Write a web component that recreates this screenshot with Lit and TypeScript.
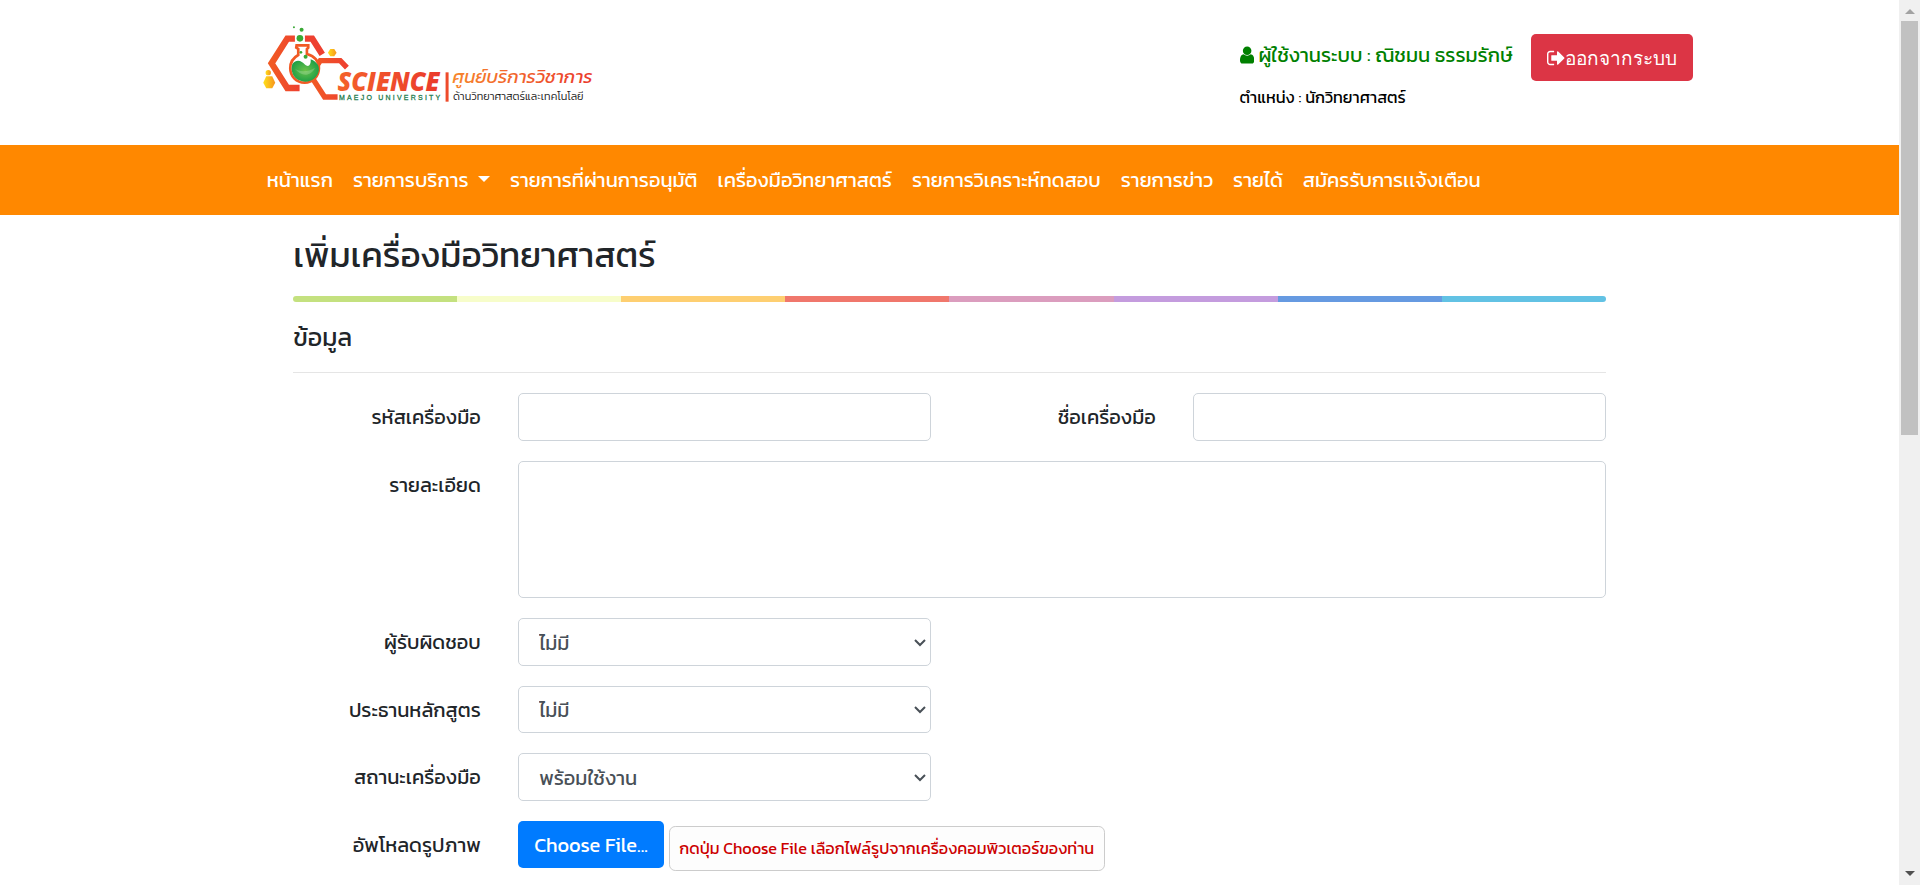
import { LitElement, html, css, svg } from "lit";
import { customElement } from "lit/decorators.js";

const NAV = [
  { label: "หน้าแรก" },
  { label: "รายการบริการ", menu: true },
  { label: "รายการที่ผ่านการอนุมัติ" },
  { label: "เครื่องมือวิทยาศาสตร์" },
  { label: "รายการวิเคราะห์ทดสอบ" },
  { label: "รายการข่าว" },
  { label: "รายได้" },
  { label: "สมัครรับการเเจ้งเตือน" },
];

const SELECTS = [
  { label: "ผู้รับผิดชอบ", value: "ไม่มี" },
  { label: "ประธานหลักสูตร", value: "ไม่มี" },
  { label: "สถานะเครื่องมือ", value: "พร้อมใช้งาน" },
];

@customElement("site-logo")
class SiteLogo extends LitElement {
  static styles = css`
    :host { display: block; }
    svg { display: block; width: 283.4px; height: 80px; }
    .science { font: italic 800 79px "Open Sans", sans-serif; }
    .uni { font: 400 21px "Liberation Sans", sans-serif; }
    .th { font: italic 400 55px Kanit, sans-serif; }
    .sub { font: 300 33px Kanit, sans-serif; }
  `;
  render() {
    return html`<svg viewBox="17.25 0 1062.75 300" preserveAspectRatio="none">
      ${svg`<defs>
        <linearGradient id="o" x1="0" x2="1"><stop offset="0" stop-color="#f15a24"/><stop offset="1" stop-color="#ee4030"/></linearGradient>
        <linearGradient id="s" x1="0" x2="1"><stop offset="0" stop-color="#f4622a"/><stop offset="1" stop-color="#ea3a2c"/></linearGradient>
        <linearGradient id="r" x1="0" x2="1"><stop offset="0" stop-color="#f7862c"/><stop offset="1" stop-color="#ea3a2c"/></linearGradient>
        <linearGradient id="y" x1="0" x2="1"><stop offset="0" stop-color="#ffe01a"/><stop offset="1" stop-color="#f7941d"/></linearGradient>
        <radialGradient id="g" cx=".5" cy=".5" r=".6"><stop offset="0" stop-color="#6cc24a"/><stop offset="1" stop-color="#149a45"/></radialGradient>
      </defs>
      <path d="M134 71H111L64 145L111 219H148" fill="none" stroke="url(#o)" stroke-width="19"/>
      <path d="M164 71H186L216 118" fill="none" stroke="#ee4030" stroke-width="19"/>
      <path d="M290 158L270 137H210L196 158M193 180L187 190L223 246H262" fill="none" stroke="url(#o)" stroke-width="16"/>
      <path d="M139 91H174V98L170 102V117C191 123 206 138 206 160C206 185 187 203 163 203C139 203 120 185 120 160C120 141 131 127 144 120V102L138 98Z" fill="#fff" stroke="#f15a24" stroke-width="8"/>
      <path d="M126 148C140 129 156 140 163 148C178 161 183 144 181 133C197 139 207 150 206 164C204 184 187 200 165 200C142 200 124 184 124 160Z" fill="url(#g)"/>
      <path d="M133 160C150 175 176 169 194 159C182 185 152 187 133 160Z" fill="#fff" opacity=".2"/>
      <circle cx="149" cy="70" r="10" fill="#39a935"/><circle cx="154" cy="44" r="6" fill="#39a935"/><circle cx="131" cy="37" r="3" fill="#39a935"/>
      <circle cx="166" cy="125" r="6" fill="#39a935"/><circle cx="152" cy="112" r="4" fill="#39a935"/>
      <path d="M48 184H66L75 203L66 220H48L39 203Z" fill="url(#y)"/>
      <circle cx="54" cy="173" r="8" fill="url(#y)"/>
      <path d="M240 102H252L259 113L252 124H240L233 113Z" fill="url(#y)"/>
      <text class="science" x="262" y="227" textLength="306" lengthAdjust="spacingAndGlyphs" fill="url(#s)">SCIENCE</text>
      <text class="uni" x="266" y="255" textLength="304" lengthAdjust="spacing" fill="#1b7a4b" stroke="#1b7a4b" stroke-width=".8">MAEJO UNIVERSITY</text>
      <rect x="586" y="172" width="9" height="88" fill="#ee4b2b"/>
      <text class="th" x="607" y="205" textLength="420" lengthAdjust="spacingAndGlyphs" fill="url(#r)">ศูนย์บริการวิชาการ</text>
      <text class="sub" x="608" y="254" textLength="392" lengthAdjust="spacingAndGlyphs" fill="#222">ด้านวิทยาศาสตร์และเทคโนโลยี</text>`}
    </svg>`;
  }
}

@customElement("app-root")
class AppRoot extends LitElement {
  static styles = css`
    :host { display: flex; height: 885px; overflow: hidden; background: #fff; }
    *, *::before { box-sizing: border-box; }
    .page { zoom: 1.25; width: 1519.2px; height: 708px; overflow: hidden; flex: none;
      font: 400 16px/1.5 Kanit, sans-serif; color: #212529; }
    .header { height: 116px; padding: 12px 164.8px 0 204.6px; display: flex; align-items: flex-start; }
    .account { margin-left: auto; display: flex; }
    .user { width: 233.2px; padding-top: 19.8px; }
    .name { color: green; white-space: nowrap; }
    .role { color: #000; font-size: 13px; line-height: 20px; margin-top: 12px; }
    .icon { display: inline-block; height: 16px; vertical-align: -2.3px; fill: currentColor; }
    .logout { margin-top: 15px; width: 129.6px; height: 38px; padding: 1px 0 0; border: 0; border-radius: 4px; background: #dc3545; color: #fff;
      font: 500 15.2px/1.5 "Open Sans", sans-serif; white-space: nowrap; }
    .nav { height: 56px; background: #ff8800; padding-left: 205.4px; display: flex; align-items: center; }
    .nav a { padding: 0 8px; color: #fff; white-space: nowrap; }
    .nav .menu::after { content: ""; display: inline-block; margin-left: 7.5px; vertical-align: 4px;
      border: 4.8px solid transparent; border-top-color: #fff; border-bottom: 0; }
    .content { margin-left: 219.6px; width: 1080px; padding: 0 15px; }
    h3 { margin: 0; height: 64.8px; padding-top: 15px; font-size: 28px; font-weight: 400; line-height: 33.6px; }
    .rainbow { height: 5px; border-radius: 5px; background: linear-gradient(to right,
      #c4e17f 12.5%, #f7fdca 12.5% 25%, #fecf71 25% 37.5%, #f0776c 37.5% 50%,
      #db9dbe 50% 62.5%, #c49cde 62.5% 75%, #669ae1 75% 87.5%, #62c2e4 87.5%); }
    h5 { margin: 0; height: 56.8px; padding-top: 16px; font-size: 20px; font-weight: 400; line-height: 24px; border-bottom: 1px solid rgba(0,0,0,.1); }
    .form { margin: 16px -15px 0; display: grid; grid-template-columns: 180px 360px 180px 360px; row-gap: 16px; }
    .form > * { padding: 0 15px; }
    .form label { text-align: right; padding-top: 7px; white-space: nowrap; }
    .form .start { grid-column: 1; }
    .wide { grid-column: 2 / 5; }
    .control { display: block; width: 100%; height: 38px; padding: 6px 12px; margin: 0; font: 400 16px/1.5 Kanit, sans-serif; color: #495057;
      background: #fff; border: 1px solid #ced4da; border-radius: 4px; resize: none; }
    .area { height: 110px; }
    .upload { display: flex; gap: 4px; }
    .choose { width: 116.4px; height: 38px; padding: 0; border: 0; border-radius: 4px; background: #007bff; color: #fff; font: 400 16px/1.5 Kanit, sans-serif; }
    .hint { margin-top: 4px; height: 36px; padding: 0 7.6px; border: 1px solid #ccc; border-radius: 5px; background: #fdfdfd;
      color: #c00; font-size: 13px; line-height: 34px; white-space: nowrap; }
    .scroll { width: 21px; height: 885px; background: #f0f0f0; display: flex; flex-direction: column; align-items: center; padding: 9px 0; }
    .up { border: 5px solid transparent; border-bottom-color: #a3a3a3; border-top: 0; }
    .down { margin-top: auto; border: 5px solid transparent; border-top-color: #505050; border-bottom: 0; }
    .thumb { margin-top: 7px; width: 17px; height: 414px; background: #c1c1c1; }
  `;

  render() {
    return html`
      <div class="page">
        <header class="header">
          <site-logo></site-logo>
          <div class="account">
            <div class="user">
              <div class="name"><svg class="icon" viewBox="0 0 1280 1792"><path d="M1280 1399q0 109-62.5 187t-150.5 78h-854q-88 0-150.5-78T0 1399q0-85 8.5-160.5t31.5-152 58.5-131 94-89T327 832q131 128 313 128t313-128q76 0 134.5 34.5t94 89 58.5 131 31.5 152 8.5 160.5zm-256-887q0 159-112.5 271.5T640 896 368.5 783.5 256 512t112.5-271.5T640 128t271.5 112.5T1024 512z"/></svg> ผู้ใช้งานระบบ : ณิชมน ธรรมรักษ์</div>
              <div class="role">ตำแหน่ง : นักวิทยาศาสตร์</div>
            </div>
            <button class="logout"><svg class="icon" viewBox="0 0 1664 1792"><path d="M640 1440q0 4 1 20t.5 26.5-3 23.5-10 19.5-20.5 6.5h-320q-119 0-203.5-84.5T0 1248V544q0-119 84.5-203.5T288 256h320q13 0 22.5 9.5T640 288q0 4 1 20t.5 26.5-3 23.5-10 19.5T608 384H288q-66 0-113 47t-47 113v704q0 66 47 113t113 47h312l11.5 1 11.5 3 8 5.5 7 9 2 13.5zm928-544q0 26-19 45l-544 544q-19 19-45 19t-45-19-19-45v-288H448q-26 0-45-19t-19-45V704q0-26 19-45t45-19h448V352q0-26 19-45t45-19 45 19l544 544q19 19 19 45z"/></svg>ออกจากระบบ</button>
          </div>
        </header>
        <nav class="nav">${NAV.map((n) => html`<a class=${n.menu ? "menu" : ""}>${n.label}</a>`)}</nav>
        <main class="content">
          <h3>เพิ่มเครื่องมือวิทยาศาสตร์</h3>
          <div class="rainbow"></div>
          <h5>ข้อมูล</h5>
          <div class="form">
            <label>รหัสเครื่องมือ</label><div><input class="control" /></div>
            <label>ชื่อเครื่องมือ</label><div><input class="control" /></div>
            <label class="start">รายละเอียด</label><div class="wide"><textarea class="control area"></textarea></div>
            ${SELECTS.map((s) => html`<label class="start">${s.label}</label><div><select class="control"><option>${s.value}</option></select></div>`)}
            <label class="start">อัพโหลดรูปภาพ</label>
            <div class="wide upload"><button class="choose">Choose File...</button><span class="hint">กดปุ่ม Choose File เลือกไฟล์รูปจากเครื่องคอมพิวเตอร์ของท่าน</span></div>
          </div>
        </main>
      </div>
      <div class="scroll"><i class="up"></i><i class="thumb"></i><i class="down"></i></div>
    `;
  }
}
